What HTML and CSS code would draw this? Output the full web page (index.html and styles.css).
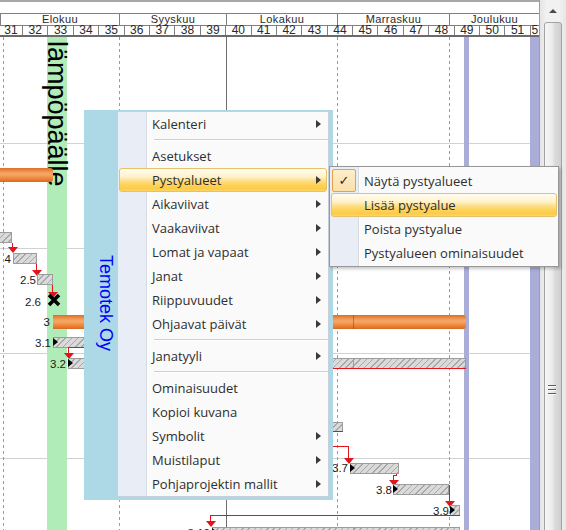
FILE: index.html
```html
<!DOCTYPE html>
<html lang="fi">
<head>
<meta charset="utf-8">
<title>Gantt</title>
<link rel="stylesheet" href="styles.css">
</head>
<body>
<div class="app">
  <div class="chart">
    <div class="topline"></div>
    <div class="gap"></div>
    <div class="months">
      <div class="month">Elokuu</div>
      <div class="month">Syyskuu</div>
      <div class="month">Lokakuu</div>
      <div class="month">Marraskuu</div>
      <div class="month">Joulukuu</div>
    </div>
    <div class="weeks">
      <div class="week">31</div><div class="week">32</div><div class="week">33</div><div class="week">34</div>
      <div class="week">35</div><div class="week">36</div><div class="week">37</div><div class="week">38</div>
      <div class="week">39</div><div class="week">40</div><div class="week">41</div><div class="week">42</div>
      <div class="week">43</div><div class="week">44</div><div class="week">45</div><div class="week">46</div>
      <div class="week">47</div><div class="week">48</div><div class="week">49</div><div class="week">50</div>
      <div class="week">51</div><div class="week">5</div>
    </div>
    <div class="canvas">
      <div class="hline" style="top:106px"></div>
      <div class="hline" style="top:211px"></div>
      <div class="hline" style="top:316px"></div>
      <div class="hline" style="top:421px"></div>

      <div class="band green" style="left:47px;width:20px"></div>
      <div class="band lav" style="left:464px;width:5px"></div>
      <div class="band lav" style="left:530px;width:9px"></div>
      <div class="vtext">lämpöpäälle</div>

      <div class="vdash" style="left:3px"></div>
      <div class="vdash" style="left:119px"></div>
      <div class="vdash" style="left:337px"></div>
      <div class="vdash" style="left:449px"></div>
      <div class="vline" style="left:226px"></div>

      <div class="summary" style="left:-10px;top:131px;width:63px"></div>

      <div class="bar hatch" style="left:-20px;top:195px;width:32px"></div>
      <div class="rl" style="left:12px;top:206px;width:1px;height:5px"></div>
      <div class="arr" style="left:12.5px;top:210px"></div>

      <div class="lbl" style="left:11px;top:221.5px">4</div>
      <div class="bar hatch" style="left:13px;top:216px;width:24px"></div>
      <div class="rl" style="left:36px;top:227px;width:1px;height:6px"></div>
      <div class="arr" style="left:37px;top:233px"></div>

      <div class="lbl" style="left:36px;top:243px">2.5</div>
      <div class="bar hatch" style="left:37px;top:237px;width:16px"></div>
      <div class="rl" style="left:52px;top:248px;width:1px;height:7px"></div>
      <div class="arr" style="left:52.5px;top:255px"></div>

      <div class="lbl" style="left:41px;top:264.5px">2.6</div>
      <svg class="ms" style="left:47px;top:256px" width="14" height="14" viewBox="0 0 14 14"><path d="M2 2L12 12M12 2L2 12" stroke="#000" stroke-width="3.6" fill="none"/></svg>

      <div class="lbl" style="left:50px;top:285px">3</div>
      <div class="summary" style="left:53px;top:278px;width:413px"><div class="seg" style="left:300px"></div></div>

      <div class="lbl" style="left:51px;top:306px">3.1</div>
      <div class="bar hatch mk" style="left:53px;top:300px;width:70px"></div>
      <div class="rl" style="left:68px;top:310px;width:60px;height:1px"></div>
      <div class="rl" style="left:68px;top:310px;width:1px;height:6px"></div>
      <div class="arr" style="left:68.5px;top:316px"></div>

      <div class="lbl" style="left:66px;top:327px">3.2</div>
      <div class="bar hatch mk" style="left:68px;top:321px;width:398px"><div class="seg" style="left:284px"></div></div>
      <div class="rl" style="left:200px;top:331px;width:266px;height:1px"></div>

      <div class="bar hatch" style="left:250px;top:385px;width:93px;height:10px"></div>
      <div class="rl" style="left:250px;top:394px;width:93px;height:1px"></div>

      <div class="rl" style="left:250px;top:409px;width:99px;height:1px"></div>
      <div class="rl" style="left:348px;top:409px;width:1px;height:12px"></div>
      <div class="arr" style="left:348.5px;top:421px"></div>

      <div class="lbl" style="left:348px;top:431px">3.7</div>
      <div class="bar hatch mk" style="left:350px;top:426px;width:49px"></div>
      <div class="rl" style="left:396px;top:437px;width:1px;height:2px"></div>
      <div class="rl" style="left:393px;top:438px;width:4px;height:1px"></div>
      <div class="rl" style="left:393px;top:438px;width:1px;height:5px"></div>
      <div class="arr" style="left:393.5px;top:443px"></div>

      <div class="lbl" style="left:392px;top:453px">3.8</div>
      <div class="bar hatch mk" style="left:393px;top:447px;width:56px"></div>
      <div class="rl" style="left:449px;top:448px;width:1px;height:17px"></div>
      <div class="arr" style="left:449.5px;top:464px"></div>

      <div class="lbl" style="left:449px;top:474px">3.9</div>
      <div class="bar hatch mk" style="left:450px;top:468px;width:10px"></div>
      <div class="rl" style="left:210px;top:478px;width:250px;height:1px"></div>
      <div class="rl" style="left:210px;top:478px;width:1px;height:7px"></div>
      <div class="arr" style="left:210.5px;top:484px"></div>

      <div class="lbl" style="left:210px;top:496px">3.10</div>
      <div class="bar hatch mk" style="left:212px;top:490px;width:248px"><div class="seg" style="left:140px"></div></div>
    </div>
  </div>
  <div class="scrollbar">
    <div class="sb-up"></div>
    <div class="sb-thumb"><div class="sb-grip"></div></div>
  </div>
</div>

<div class="note"><span class="note-text">Temotek Oy</span></div>

<div class="menu">
  <div class="mi sub">Kalenteri</div>
  <div class="msep"></div>
  <div class="mi">Asetukset</div>
  <div class="mi sub hot">Pystyalueet</div>
  <div class="mi sub">Aikaviivat</div>
  <div class="mi sub">Vaakaviivat</div>
  <div class="mi sub">Lomat ja vapaat</div>
  <div class="mi sub">Janat</div>
  <div class="mi sub">Riippuvuudet</div>
  <div class="mi sub">Ohjaavat päivät</div>
  <div class="msep"></div>
  <div class="mi sub">Janatyyli</div>
  <div class="msep"></div>
  <div class="mi">Ominaisuudet</div>
  <div class="mi">Kopioi kuvana</div>
  <div class="mi sub">Symbolit</div>
  <div class="mi sub">Muistilaput</div>
  <div class="mi sub">Pohjaprojektin mallit</div>
</div>

<div class="submenu">
  <div class="mi"><span class="chk">✓</span>Näytä pystyalueet</div>
  <div class="mi hot">Lisää pystyalue</div>
  <div class="mi">Poista pystyalue</div>
  <div class="mi">Pystyalueen ominaisuudet</div>
</div>
</body>
</html>
```

FILE: styles.css
```css
* { box-sizing: border-box; }
html, body { margin: 0; padding: 0; }
body {
  width: 566px;
  height: 530px;
  overflow: hidden;
  position: relative;
  background: #fff;
  font-family: "Liberation Sans", Arial, sans-serif;
}
.app { display: flex; width: 566px; height: 530px; }
.chart {
  width: 540px;
  display: flex;
  flex-direction: column;
  border-right: 1px solid #a0a0a0;
}
.topline { height: 2px; background: #a8a8a8; }
.gap { height: 11px; }
.months {
  display: grid;
  grid-template-columns: 119px 107px 111px 112px 1fr;
  border-top: 1px solid #808080;
  height: 12px;
}
.month {
  border-left: 1px solid #808080;
  font-size: 11px;
  line-height: 11px;
  letter-spacing: 0.4px;
  text-align: center;
  color: #2a2a2a;
}
.weeks {
  display: grid;
  grid-template-columns: 22px repeat(20, 25.4px) 1fr;
  border-top: 1px solid #808080;
  border-bottom: 2px solid #6a6a6a;
  height: 12px;
}
.week {
  border-left: 1px solid #808080;
  font-size: 12px;
  line-height: 9px;
  text-align: center;
  color: #2a2a2a;
}
.week:first-child { border-left: none; }

.canvas { position: relative; flex: 1; overflow: hidden; }
.hline { position: absolute; left: 0; right: 0; height: 1px; background: #d2d2d2; }
.band { position: absolute; top: 0; bottom: 0; }
.band.green { background: #b0ecb8; }
.band.lav { background: #a9add8; }
.vtext {
  position: absolute;
  left: 41px;
  top: 4px;
  writing-mode: vertical-rl;
  font-size: 27px;
  line-height: 31px;
  color: #000;
  white-space: nowrap;
}
.vdash {
  position: absolute; top: 0; bottom: 0; width: 1px;
  background: repeating-linear-gradient(to bottom, #e5883c 0 3px, transparent 3px 6px);
}
.vline { position: absolute; top: 0; bottom: 0; width: 1px; background: #6e6e6e; }

.summary {
  position: absolute;
  height: 14px;
  border-radius: 0 3px 3px 0;
  background: linear-gradient(to bottom, #de6d24 0%, #f19a58 30%, #f6a868 45%, #ef8c40 70%, #d9681f 100%);
}
.bar { position: absolute; height: 11px; }
.hatch {
  border: 1px solid #9c9c9c;
  background: repeating-linear-gradient(135deg, #dadada 0 3.3px, #a9a9a9 3.3px 4.4px);
}
.seg { position: absolute; top: 0; bottom: 0; width: 1px; background: rgba(120, 60, 20, 0.45); }
.hatch .seg { background: #a0a0a0; }
.mk::before {
  content: "";
  position: absolute;
  left: -1px;
  top: 0;
  border-left: 5px solid #000;
  border-top: 4.5px solid transparent;
  border-bottom: 4.5px solid transparent;
}
.rl { position: absolute; background: #e3141b; }
.arr {
  position: absolute;
  width: 0; height: 0;
  border-left: 5px solid transparent;
  border-right: 5px solid transparent;
  border-top: 6px solid #e3141b;
  transform: translateX(-50%);
}
.ms { position: absolute; }
.lbl {
  position: absolute;
  font-size: 11.5px;
  line-height: 12px;
  white-space: nowrap;
  color: #1a1a1a;
  transform: translate(-100%, -50%);
}

.scrollbar {
  width: 26px;
  overflow: hidden;
  display: flex;
  flex-direction: column;
  align-items: center;
  background: linear-gradient(to right, #e4e4e4, #f1f1f1 25%, #f1f1f1 75%, #e6e6e6);
}
.sb-up {
  flex: none;
  height: 22px;
  width: 18px;
  position: relative;
}
.sb-up::before {
  content: "";
  position: absolute;
  left: 5px;
  top: 9px;
  border-bottom: 4px solid #4a4a4a;
  border-left: 4px solid transparent;
  border-right: 4px solid transparent;
}
.sb-thumb {
  flex: none;
  width: 18px;
  height: 700px;
  border: 1px solid #a2a2a2;
  border-radius: 3px;
  background: linear-gradient(to right, #f6f6f6, #ececec 45%, #dcdcdc 60%, #d0d0d0);
  position: relative;
}
.sb-grip {
  position: absolute;
  left: 3px;
  top: 362px;
  width: 8px;
  height: 10px;
  background: repeating-linear-gradient(to bottom, #5c5c5c 0 1px, #fbfbfb 1px 2px, transparent 2px 4px);
}

.note {
  position: absolute;
  left: 84px;
  top: 110px;
  width: 249px;
  height: 390px;
  background: #add8e6;
  padding: 145px 0 0 11px;
}
.note-text {
  display: block;
  writing-mode: vertical-rl;
  width: 21px;
  line-height: 21px;
  font-size: 18px;
  color: #0000ff;
  white-space: nowrap;
}

.menu, .submenu {
  position: absolute;
  font-family: "Open Sans", "Noto Sans", sans-serif;
  font-size: 13px;
  color: #2e2e2e;
  background: linear-gradient(to right, #e9edf5 0 28px, #d6dae0 28px 29px, #ffffff 29px 30px, #fafafa 30px);
}
.menu {
  left: 117px;
  top: 111px;
  width: 212px;
  border: 1px solid #c6d0dc;
}
.submenu {
  left: 329px;
  top: 166px;
  width: 230px;
  padding: 2px 0 1px;
  border: 1px solid #979797;
  box-shadow: 2px 2px 3px rgba(0, 0, 0, 0.22);
}
.mi {
  position: relative;
  height: 24px;
  line-height: 24px;
  margin: 0 1px;
  padding-left: 33px;
  white-space: nowrap;
}
.mi.sub::after {
  content: "";
  position: absolute;
  right: 6px;
  top: 7.5px;
  border-left: 5px solid #3a3a3a;
  border-top: 4.5px solid transparent;
  border-bottom: 4.5px solid transparent;
}
.mi.hot {
  border: 1px solid #e6c06a;
  border-radius: 3px;
  line-height: 22px;
  padding-left: 32px;
  background: linear-gradient(to bottom, #fffcf0 0%, #fff3cc 35%, #fee296 50%, #fdd45c 70%, #fccb46 90%, #fdd66a 100%);
}
.mi.hot.sub::after { right: 5px; top: 6.5px; }
.msep {
  height: 8px;
  margin-left: 36px;
  background: linear-gradient(to bottom, transparent 3px, #d0d0d0 3px 4px, #ffffff 4px 5px, transparent 5px);
}
.chk {
  position: absolute;
  left: 1px;
  top: 0;
  width: 24px;
  height: 23px;
  border: 1px solid #e3a34b;
  border-radius: 2px;
  background: linear-gradient(#fdeecb, #fbe0a8);
  text-align: center;
  line-height: 21px;
  font-family: "DejaVu Sans", sans-serif;
  font-size: 13px;
  color: #2b2b2b;
}
```
